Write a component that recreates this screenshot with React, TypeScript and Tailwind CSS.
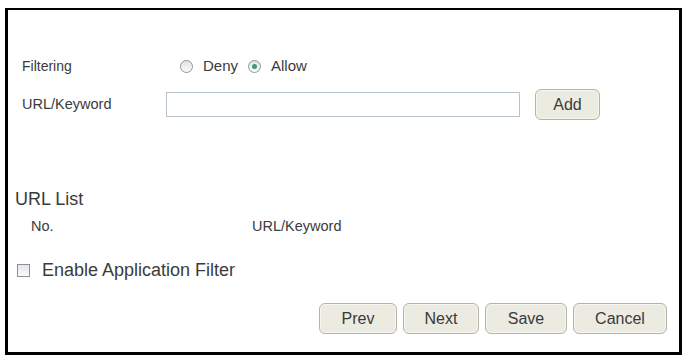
import React from "react";

function Radio({ checked }: { checked?: boolean }) {
  return (
    <span className="flex h-[13px] w-[13px] items-center justify-center rounded-full border border-[#8f959c] bg-[linear-gradient(180deg,#dfe3e6,#fbfbfb)]">
      {checked && <span className="h-[5px] w-[5px] rounded-full bg-[#3c9b6e]" />}
    </span>
  );
}

function Btn({ label, w }: { label: string; w: string }) {
  return (
    <button
      className={`${w} h-[31px] rounded-[6px] border border-[#b4b3a8] bg-[#ecebe1] text-[16px] text-[#3a3a3a] shadow-[inset_0_0_0_1px_#f7f6ef]`}
    >
      {label}
    </button>
  );
}

export default function App() {
  return (
    <div className="h-[357px] w-[684px] bg-white pl-[5px] pt-[8px] font-['Liberation_Sans',Arial,sans-serif] text-[#3b3b3b]">
      <div className="flex h-[347px] w-[677px] flex-col border-[3px] border-t-2 border-black">
        {/* Filtering */}
        <div className="mt-[44px] flex h-[24px] items-center pl-[14px] text-[14px]">
          <span className="w-[158px]">Filtering</span>
          <div className="flex items-center text-[15px]">
            <Radio />
            <span className="ml-[10px]">Deny</span>
            <span className="ml-[10px]">
              <Radio checked />
            </span>
            <span className="ml-[10px]">Allow</span>
          </div>
        </div>

        {/* URL/Keyword input */}
        <div className="mt-[11px] flex h-[31px] items-center pl-[14px] text-[14.5px]">
          <span className="w-[144px]">URL/Keyword</span>
          <input
            type="text"
            className="h-[25px] w-[354px] border border-[#b9c3cc] bg-white outline-none"
          />
          <span className="ml-[15px]">
            <Btn label="Add" w="w-[65px]" />
          </span>
        </div>

        {/* URL List */}
        <div className="mt-[68px] flex h-[22px] items-center pl-[7px] text-[18px]">URL List</div>
        <div className="mt-[7px] flex h-[20px] items-center pl-[23px] text-[14.5px]">
          <span className="w-[221px]">No.</span>
          <span>URL/Keyword</span>
        </div>

        {/* Application filter */}
        <div className="mt-[22px] flex h-[22px] items-center pl-[9px] text-[18px]">
          <span className="h-[13px] w-[13px] border border-[#8a8f99] bg-[linear-gradient(180deg,#e3e6ea,#fafafa)]" />
          <span className="ml-[12px]">Enable Application Filter</span>
        </div>

        {/* Actions */}
        <div className="mt-[22px] flex justify-end gap-[6px] pr-[12px]">
          <Btn label="Prev" w="w-[78px]" />
          <Btn label="Next" w="w-[76px]" />
          <Btn label="Save" w="w-[82px]" />
          <Btn label="Cancel" w="w-[94px]" />
        </div>
      </div>
    </div>
  );
}
